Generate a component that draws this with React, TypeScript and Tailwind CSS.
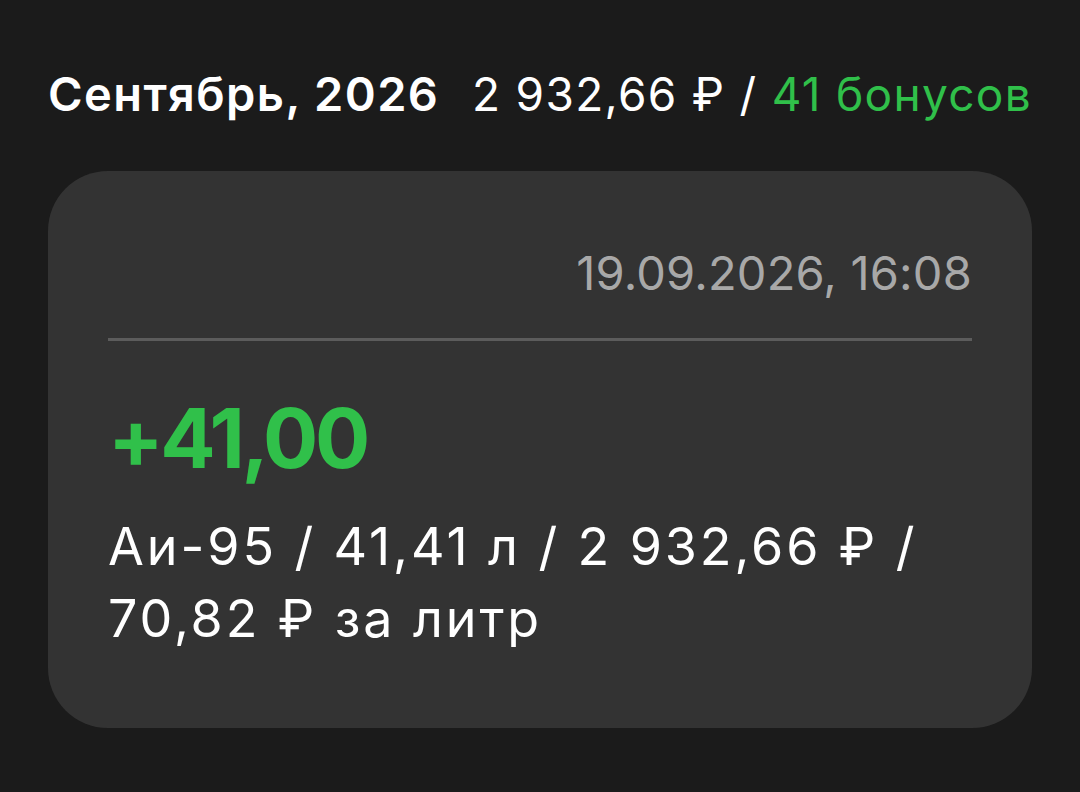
const font = { fontFamily: "Inter, 'Noto Sans', sans-serif" };

const month = {
  title: "Сентябрь, 2026",
  total: "2 932,66 ₽",
  bonus: "41 бонусов",
};

const operation = {
  date: "19.09.2026, 16:08",
  amount: "+41,00",
  details: "Аи-95 / 41,41 л / 2 932,66 ₽ / 70,82 ₽ за литр",
};

export default function App() {
  return (
    <div
      className="w-[1080px] h-[792px] bg-[#1b1b1b] text-white px-12 pt-[62px] overflow-hidden"
      style={font}
    >
      {/* Шапка месяца */}
      <div className="flex items-center justify-between h-[64px]">
        <span className="text-[47px] font-semibold leading-[64px] tracking-[1.4px]">
          {month.title}
        </span>
        <span className="text-[46px] font-normal leading-[64px] tracking-[1.3px]">
          {month.total} / <span className="text-[#30c04a]">{month.bonus}</span>
        </span>
      </div>

      {/* Карточка операции */}
      <div className="mt-[45px] rounded-[60px] bg-[#333333] px-[60px] pt-[70px] pb-[73px]">
        <div className="text-right text-[47px] leading-[64px] tracking-[0.2px] text-[#a8a8a8]">
          {operation.date}
        </div>

        <div className="mt-[33px] h-[3px] bg-[#5c5c5c]" />

        <div className="mt-[50px] text-[82px] font-bold leading-[96px] text-[#30c04a] tracking-[-3.3px]">
          {operation.amount}
        </div>

        <div className="mt-[24px] text-[52px] leading-[72px] tracking-[2.9px]">
          {operation.details}
        </div>
      </div>
    </div>
  );
}
